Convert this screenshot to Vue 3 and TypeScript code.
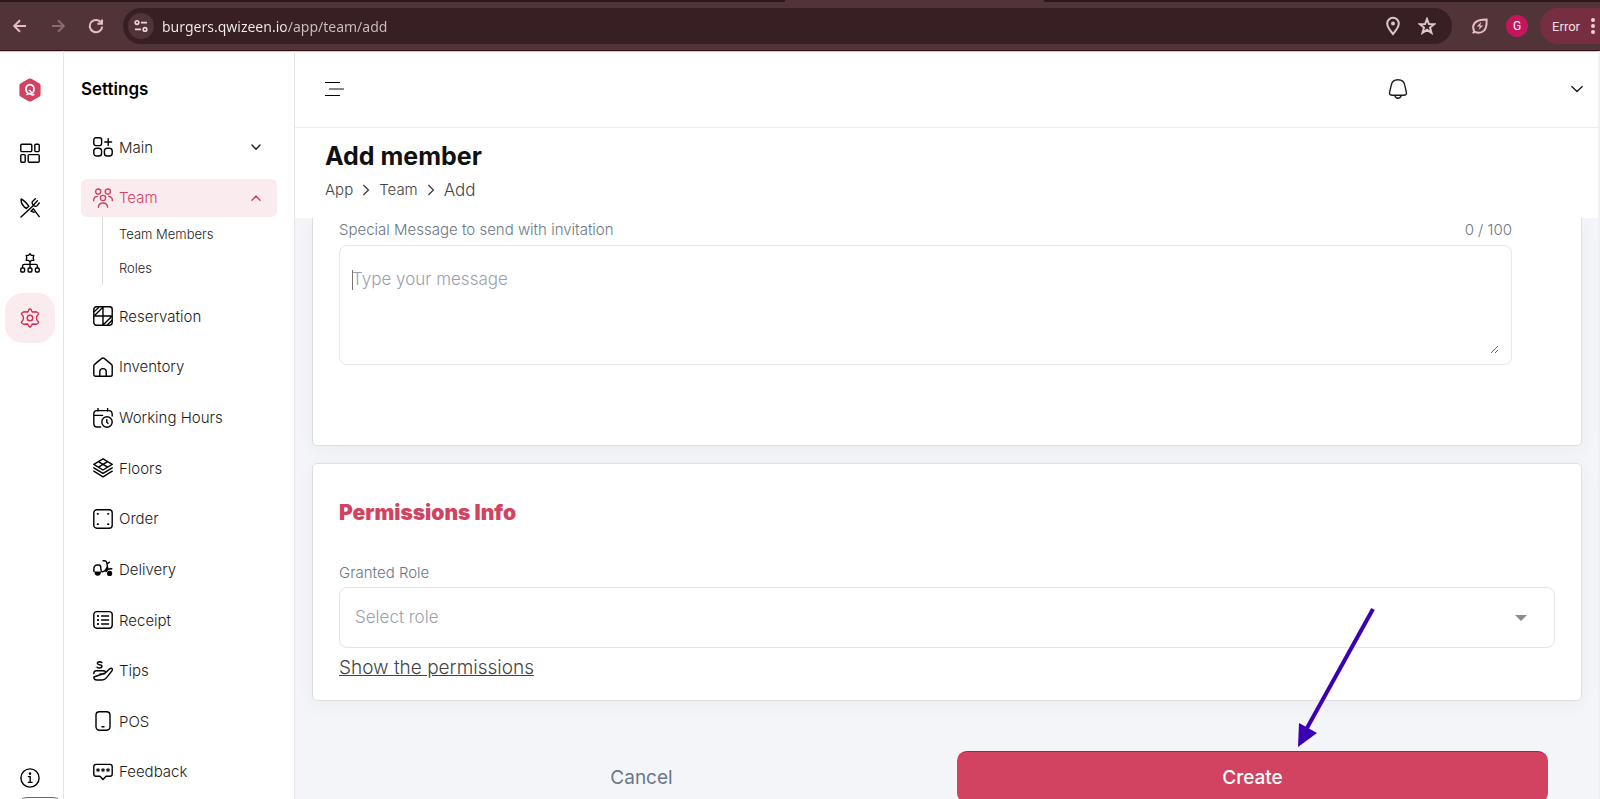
<script setup lang="ts">
import { ref } from 'vue'

interface NavItem {
  label: string
  icon: string
  active?: boolean
  chevron?: 'up' | 'down'
  children?: string[]
}

const url = ref('burgers.qwizeen.io/app/team/add')
const message = ref('')
const role = ref('')

const gear =
  '<path d="M10 .8 Q11 1 12.2 4 L16.4 3.8 Q18.6 4.6 18.6 5.8 L16.8 8.4 Q16.2 10 16.8 11.6 L18.6 14.2 Q18.6 15.4 16.4 16.2 L12.2 16 Q11 19 10 19.2 Q9 19 7.8 16 L3.6 16.2 Q1.4 15.4 1.4 14.2 L3.2 11.6 Q3.8 10 3.2 8.4 L1.4 5.8 Q1.4 4.6 3.6 3.8 L7.8 4 Q9 1 10 .8 Z"/><circle cx="10" cy="10" r="2.8"/>'

const railItems = [
  { label: 'Dashboard', active: false, icon: '<rect x=".8" y="1.2" width="11" height="7.4" rx="1"/><rect x="14.8" y="1.2" width="4.4" height="7.4" rx="1"/><rect x=".8" y="11.6" width="4.4" height="7.6" rx="1"/><rect x="8.2" y="11.6" width="11" height="7.6" rx="1"/>' },
  { label: 'Kitchen', active: false, icon: '<path d="M1 19 L13.4 7.4 M13.4 7.4 Q11 4.8 13 3 L15.4 .8 M13.4 7.4 Q15.8 9.4 17.4 7.4 L19.2 5 M14 6.4 L17.4 2.8 M1.2 1 Q.6 5.6 4 8.6 L6.4 10.6 L8.8 8.2 Q4.8 2.8 1.2 1 Z M11 13.2 L13.4 10.8 L19.2 18.6 M11 13.2 L14.2 14.4"/>' },
  { label: 'Organization', active: false, icon: '<path d="M10 .8 L11.4 2.4 L13.8 2.4 L13.2 4.8 L13.8 7.2 L11.4 7.4 L10 9 L8.6 7.4 L6.2 7.2 L6.8 4.8 L6.2 2.4 L8.6 2.4 Z M10 9 V14.6 M2.6 14.6 V13 Q2.6 11.4 4.2 11.4 H15.8 Q17.4 11.4 17.4 13 V14.6"/><rect x=".8" y="15" width="3.8" height="4" rx="1"/><rect x="8.1" y="15" width="3.8" height="4" rx="1"/><rect x="15.4" y="15" width="3.8" height="4" rx="1"/>' },
  { label: 'Settings', active: true, icon: gear },
]

const navItems: NavItem[] = [
  { label: 'Main', chevron: 'down', icon: '<rect x=".8" y=".8" width="7.8" height="7.8" rx="2"/><rect x=".8" y="11.2" width="7.8" height="7.8" rx="2.8"/><rect x="11.4" y="11.2" width="7.8" height="7.8" rx="2.8"/><path d="M15.2 1.6 V8.4 M11.8 5 H18.6"/>' },
  { label: 'Team', chevron: 'up', active: true, children: ['Team Members', 'Roles'], icon: '<circle cx="5.2" cy="3.6" r="2.6"/><circle cx="14.8" cy="3.6" r="2.6"/><circle cx="10" cy="10" r="2.6"/><path d="M.6 12.6 Q.8 8.6 4.4 8.4 M19.4 12.6 Q19.2 8.6 15.6 8.4 M5.4 19.2 Q5.6 15 10 15 Q14.4 15 14.6 19.2"/>' },
  { label: 'Reservation', icon: '<rect x=".8" y=".8" width="18.4" height="18.4" rx="2.6"/><path d="M10 1 V19 M1 10 H19 M1.4 5.6 L5.6 1.4 M1.6 9.4 L9.6 1.6 M10.8 18.2 L18.6 10.6 M14.6 18.8 L18.8 14.6"/>' },
  { label: 'Inventory', icon: '<path d="M.8 8.8 Q.8 8 1.6 7.4 L8.8 1.4 Q10 .5 11.2 1.4 L18.4 7.4 Q19.2 8 19.2 8.8 V17.4 Q19.2 19.2 17.4 19.2 H2.6 Q.8 19.2 .8 17.4 Z M6.8 19 V14.6 Q6.8 11.6 10 11.6 Q13.2 11.6 13.2 14.6 V19"/>' },
  { label: 'Working Hours', icon: '<path d="M7.6 19 H4 Q.8 19 .8 15.8 V5.8 Q.8 2.6 4 2.6 H16 Q19 2.6 19.2 6.4 V8 M5 .4 V3 M14.6 .4 V3 M1 7.4 H9.6"/><circle cx="14" cy="14" r="5.2"/><path d="M13.8 11.6 V14.2 L15 15.2"/>' },
  { label: 'Floors', icon: '<path d="M10 .8 L19.2 6.4 L10 12 L.8 6.4 Z M5.4 3.6 L14.6 9.2 M14.6 3.6 L5.4 9.2 M.8 9.8 L10 15.4 L19.2 9.8 M.8 13.2 L10 18.8 L19.2 13.2"/>' },
  { label: 'Order', icon: '<rect x=".8" y=".8" width="18.4" height="18.4" rx="3"/><path d="M4.6 4.8 H5 M15 4.8 H15.4 M4.6 15.2 H5 M15 15.2 H15.4" stroke-width="1.8"/>' },
  { label: 'Delivery', icon: '<path d="M1 12.4 Q.2 6 4.2 6 H6 Q7.6 6 7.8 8.4 Q7.8 12.8 9.4 12.8 Q12.6 12.4 14.4 7.4 M10.2 1.8 Q13.6 1.2 13.8 4 L14.8 9.6 M14.4 4.6 L16.4 3.2 M13 12.6 Q14.4 9.6 18.8 9.8"/><path d="M1.4 12.4 H8 Q8 16.8 4.8 16.8 Q1.4 16.8 1.4 12.4 Z" fill="currentColor" stroke="none"/><circle cx="16.6" cy="14.4" r="2.6" fill="currentColor" stroke="none"/>' },
  { label: 'Receipt', icon: '<rect x=".8" y="1.6" width="18.4" height="16.6" rx="3"/><path d="M4.8 6 H5.2 M4.8 10 H5.2 M4.8 14 H5.2" stroke-width="1.8"/><path d="M8.6 6 H15.6 M8.6 10 H15.6 M8.6 14 H15.6"/>' },
  { label: 'Tips', icon: '<path d="M9 1.6 Q8 .8 6.4 .8 Q4.2 1 4.4 2.6 Q4.8 3.6 6.4 3.8 Q9 4 9 5.4 Q8.8 7 6.4 7 Q4.8 7 4 6.2"/><path d="M.8 12.6 Q.8 9.8 3.4 9.8 H10.4 Q12.8 10 12.4 11.6 Q12 13 10.4 13 H7 M12.4 12 L16.4 8 Q18.2 6.6 19.2 7.8 Q19.8 8.6 18.8 10 L13.6 16.6 Q11.8 19 9 19 H3.8 Q.8 19 .8 16 Z"/>' },
  { label: 'POS', icon: '<rect x="3" y=".8" width="14" height="18.4" rx="3.4"/><path d="M9 15.8 H11"/>' },
  { label: 'Feedback', icon: '<path d="M3 2.4 H17 Q19.2 2.4 19.2 4.6 V12 Q19.2 14.2 17 14.2 H13 L10 17.4 L7 14.2 H3 Q.8 14.2 .8 12 V4.6 Q.8 2.4 3 2.4 Z"/><path d="M5 6.4 V9.8 M3.6 7.4 L6.4 8.8 M6.4 7.4 L3.6 8.8 M10 6.4 V9.8 M8.6 7.4 L11.4 8.8 M11.4 7.4 L8.6 8.8 M15 6.4 V9.8 M13.6 7.4 L16.4 8.8 M16.4 7.4 L13.6 8.8" stroke-width="1"/>' },
]
</script>

<template>
  <div class="window">
    <header class="browser">
      <div class="tabs"><span></span><span class="tab"></span><span></span></div>
      <div class="toolbar">
        <button class="tool" aria-label="Back">
          <svg width="16" height="16" viewBox="0 0 16 16"><path d="M14 8 H2.4 M8 2.2 L2.2 8 L8 13.8" /></svg>
        </button>
        <button class="tool dim" aria-label="Forward">
          <svg width="16" height="16" viewBox="0 0 16 16"><path d="M2 8 H13.6 M8 2.2 L13.8 8 L8 13.8" /></svg>
        </button>
        <button class="tool" aria-label="Reload">
          <svg width="16" height="16" viewBox="0 0 16 16"><path d="M13.4 5 A6.2 6.2 0 1 0 14.2 8.6 M14 1.4 V5.8 H9.4" /></svg>
        </button>
        <div class="address">
          <button class="site" aria-label="Site information">
            <svg width="14" height="14" viewBox="0 0 14 14"><circle cx="3" cy="3.6" r="1.8" /><path d="M7 3.6 H13 M1 10.4 H7" /><circle cx="11" cy="10.4" r="1.8" /></svg>
          </button>
          <input v-model="url" class="url" type="text" aria-label="Address" />
          <button class="tool light" aria-label="Location">
            <svg width="16" height="20" viewBox="0 0 16 20"><path d="M8 18 Q2.2 11.4 2.2 7.6 A5.8 5.8 0 0 1 13.8 7.6 Q13.8 11.4 8 18 Z" /><circle cx="8" cy="7.4" r="2" fill="currentColor" stroke="none" /></svg>
          </button>
          <button class="tool light" aria-label="Bookmark">
            <svg width="18" height="18" viewBox="0 0 18 18"><path d="M9 2 L10.9 7 L16.2 7.2 L12 10.5 L13.5 15.8 L9 12.8 L4.5 15.8 L6 10.5 L1.8 7.2 L7.1 7 Z" /></svg>
          </button>
        </div>
        <button class="tool" aria-label="Energy saver">
          <svg width="18" height="18" viewBox="0 0 18 18"><path d="M3.4 14.6 Q.8 10 3.6 6.2 Q6.4 2.4 15.6 2.4 Q16 10.6 13 13.6 Q9 17.4 3.4 14.6 Z M3.4 14.6 L1.8 16.2" /><path d="M10.4 4.8 L5.8 9.6 H8.8 L7.6 13 L12.2 8.4 H9.2 Z" fill="currentColor" stroke="none" /></svg>
        </button>
        <button class="profile" aria-label="Profile">G</button>
        <button class="error">
          Error
          <svg width="4" height="16" viewBox="0 0 4 16"><circle cx="2" cy="2" r="2" /><circle cx="2" cy="8" r="2" /><circle cx="2" cy="14" r="2" /></svg>
        </button>
      </div>
    </header>

    <div class="app">
      <aside class="rail">
        <a class="logo" href="#" aria-label="Home">
          <svg width="24" height="24" viewBox="0 0 24 24">
            <path d="M10.6 .8 Q12 0 13.4 .8 L21.2 5.2 Q22.6 6 22.6 7.6 V16.4 Q22.6 18 21.2 18.8 L13.4 23.2 Q12 24 10.6 23.2 L2.8 18.8 Q1.4 18 1.4 16.4 V7.6 Q1.4 6 2.8 5.2 Z" fill="#d14360" />
            <ellipse cx="12" cy="11.2" rx="4" ry="4.6" fill="none" stroke="#fff" stroke-width="1.8" />
            <path d="M8.4 17 Q11 14.4 13 16.4 Q14.6 17.6 16.4 16.4 M10.6 12.4 Q12.6 12 13.4 15" fill="none" stroke="#fff" stroke-width="1.3" />
          </svg>
        </a>
        <nav class="rail-nav" aria-label="Sections">
          <button v-for="item in railItems" :key="item.label" class="rail-item" :class="{ active: item.active }" :aria-label="item.label">
            <svg class="icon" width="20" height="20" viewBox="0 0 20 20" v-html="item.icon"></svg>
          </button>
        </nav>
        <button class="info" aria-label="Information">
          <svg class="icon" width="20" height="20" viewBox="0 0 20 20"><circle cx="10" cy="10" r="9.1" /><path d="M8.4 8.6 H10.2 V14.4 M8.4 14.4 H12" /><circle cx="10" cy="5.6" r=".6" fill="currentColor" /></svg>
        </button>
        <div class="dock"></div>
      </aside>

      <aside class="sidebar">
        <h2>Settings</h2>
        <nav class="menu" aria-label="Settings">
          <div v-for="item in navItems" :key="item.label">
            <a class="menu-item" :class="{ active: item.active }" href="#">
              <svg class="icon" width="20" height="20" viewBox="0 0 20 20" v-html="item.icon"></svg>
              <span>{{ item.label }}</span>
              <svg v-if="item.chevron" class="icon chevron" width="10" height="10" viewBox="0 0 10 10">
                <path :d="item.chevron === 'up' ? 'M1 7.2 L5 3 L9 7.2' : 'M1 3 L5 7.2 L9 3'" />
              </svg>
            </a>
            <div v-if="item.children" class="submenu">
              <a v-for="child in item.children" :key="child" href="#">{{ child }}</a>
            </div>
          </div>
        </nav>
      </aside>

      <main class="main">
        <div class="topbar">
          <button class="plain" aria-label="Toggle menu">
            <svg width="20" height="16" viewBox="0 0 20 16"><path d="M0 1.5 H15 M0 14.5 H15" stroke="#000" /><path d="M4 8 H19" stroke="#888" stroke-width="2" /></svg>
          </button>
          <button class="plain bell" aria-label="Notifications">
            <svg class="icon" width="20" height="20" viewBox="0 0 20 20"><path d="M4.4 16.2 Q1 16.2 1.6 13.4 L3.2 6.4 Q4.2 .8 10 .8 Q15.8 .8 16.8 6.4 L18.4 13.4 Q19 16.2 15.6 16.2 Z M6.8 16.4 Q7.4 19.2 10 19.2 Q12.6 19.2 13.2 16.4" /></svg>
          </button>
          <button class="plain" aria-label="Account menu">
            <svg class="icon" width="12" height="12" viewBox="0 0 12 12"><path d="M.8 3.6 L6 8.4 L11.2 3.6" /></svg>
          </button>
        </div>

        <div class="heading">
          <h1>Add member</h1>
          <nav class="crumbs" aria-label="Breadcrumb">
            <a href="#">App</a>
            <svg width="8" height="12" viewBox="0 0 8 12"><path d="M1.4 1 L6.4 6 L1.4 11" /></svg>
            <a href="#">Team</a>
            <svg width="8" height="12" viewBox="0 0 8 12"><path d="M1.4 1 L6.4 6 L1.4 11" /></svg>
            <span class="current">Add</span>
          </nav>
        </div>

        <form class="content" @submit.prevent>
          <section class="card message-card">
            <div class="label-row">
              <label for="message">Special Message to send with invitation</label>
              <span>{{ message.length }} / 100</span>
            </div>
            <div class="message-box">
              <span class="caret"></span>
              <textarea id="message" v-model="message" maxlength="100" placeholder="Type your message"></textarea>
            </div>
          </section>

          <section class="card role-card">
            <h3>Permissions Info</h3>
            <label for="role">Granted Role</label>
            <div class="select-box">
              <select id="role" v-model="role">
                <option value="">Select role</option>
              </select>
            </div>
            <a class="show" href="#">Show the permissions</a>
          </section>

          <div class="actions">
            <button type="button" class="cancel">Cancel</button>
            <button type="submit" class="create">Create</button>
          </div>
        </form>

        <svg class="arrow" width="80" height="140" viewBox="0 0 80 140">
          <path d="M76 1 L10 120" stroke="#3a00b4" stroke-width="4" />
          <path d="M1 139 L2 115 L20 125 Z" fill="#3a00b4" />
        </svg>
      </main>
    </div>
  </div>
</template>

<style>
html,
body {
  margin: 0;
  overflow: hidden;
}
</style>

<style scoped>
* {
  box-sizing: border-box;
}
.window {
  display: flex;
  flex-direction: column;
  height: 100vh;
  overflow: hidden;
  background: #fff;
  color: #1c1c1c;
  font-family: Inter, sans-serif;
  font-size: 15px;
  font-weight: 300;
}
button,
input,
select,
textarea {
  margin: 0;
  padding: 0;
  border: 0;
  background: none;
  color: inherit;
  font: inherit;
  outline: none;
}
a {
  color: inherit;
  text-decoration: none;
}
h1,
h2,
h3 {
  margin: 0;
}
svg {
  display: block;
  flex: none;
}
.icon {
  fill: none;
  stroke: currentColor;
  stroke-width: 1.4;
  stroke-linecap: round;
  stroke-linejoin: round;
}

/* browser bar */
.browser {
  flex: none;
  background: #503438;
  border-bottom: 1px solid #3a0c18;
  box-shadow: 0 1px 0 #cfc6c8;
}
.tabs {
  display: grid;
  grid-template-columns: 785fr 258fr 556fr;
  height: 2px;
  background: #2c171b;
}
.tab {
  background: #503438;
}
.toolbar {
  display: flex;
  align-items: center;
  height: 48px;
  padding-left: 12px;
  overflow: hidden;
}
.tool {
  display: grid;
  place-items: center;
  flex: none;
  width: 36px;
  height: 32px;
  margin-right: 2px;
  color: #e8bcc4;
}
.tool svg {
  fill: none;
  stroke: currentColor;
  stroke-width: 2;
}
.tool:first-child {
  width: 16px;
  margin-right: 12px;
}
.tool.dim {
  width: 36px;
  color: #8c6b70;
}
.tool.light {
  width: 34px;
  margin: 0;
  color: #dcc8cb;
}
.address {
  display: flex;
  align-items: center;
  flex: 1;
  height: 36px;
  margin: 0 10px 0 7px;
  padding: 0 8px 0 5px;
  border-radius: 18px;
  background: #381f23;
}
.site {
  display: grid;
  place-items: center;
  width: 26px;
  height: 26px;
  border-radius: 13px;
  background: #503438;
}
.site svg {
  fill: none;
  stroke: #ead9dc;
  stroke-width: 1.6;
}
.url {
  flex: 1;
  min-width: 0;
  height: 32px;
  margin-left: 8px;
  background: linear-gradient(90deg, #f5eeef 124px, #cdbfc1 124px);
  background-clip: text;
  color: transparent;
  font-family: "Noto Sans", sans-serif;
  font-size: 14px;
  font-weight: 400;
}
.profile {
  width: 22px;
  height: 22px;
  margin: 0 12px 0 6px;
  border-radius: 11px;
  background: #c2185b;
  color: #fff;
  font-family: Roboto, sans-serif;
  font-size: 12px;
  font-weight: 400;
}
.error {
  display: flex;
  align-items: center;
  gap: 11px;
  height: 36px;
  padding: 0 5px 0 12px;
  border-radius: 18px 0 0 18px;
  background: #762f41;
  color: #f3dde2;
  font-family: Roboto, sans-serif;
  font-size: 13px;
  font-weight: 400;
}
.error svg {
  fill: #f3cfd7;
}

/* frame */
.app {
  display: flex;
  flex: 1;
  min-height: 0;
}
.rail {
  display: flex;
  flex-direction: column;
  flex: none;
  width: 64px;
  padding-top: 27px;
  border-right: 1px solid #e6e6e6;
  overflow: hidden;
}
.logo {
  align-self: flex-start;
  margin-left: 18px;
}
.rail-nav {
  display: flex;
  flex-direction: column;
  flex: 1;
  gap: 5px;
  margin: 26px 0 0 5px;
}
.rail-item {
  display: grid;
  place-items: center;
  width: 50px;
  height: 50px;
  border-radius: 18px;
  color: #000;
}
.rail-item.active {
  background: #faebee;
  color: #d62e56;
}
.info {
  align-self: flex-start;
  margin: 0 0 9px 20px;
  color: #000;
}
.dock {
  flex: none;
  align-self: flex-end;
  width: 46px;
  height: 20px;
  margin-bottom: -18px;
  border: 1px solid #666;
  border-radius: 10px;
}
.sidebar {
  display: flex;
  flex-direction: column;
  flex: none;
  width: 231px;
  padding: 27px 17px 8px;
  border-right: 1px solid #e6e6e6;
}
h2 {
  font-size: 17px;
  font-weight: 600;
  line-height: 22px;
  color: #000;
}
.menu {
  display: flex;
  flex-direction: column;
  flex: 1;
  justify-content: space-between;
  margin-top: 28px;
}
.menu-item {
  display: flex;
  align-items: center;
  gap: 6px;
  height: 38px;
  padding: 0 16px 0 12px;
  border-radius: 6px;
}
.menu-item .icon:first-child {
  color: #000;
}
.menu-item.active,
.menu-item.active .icon:first-child {
  color: #d14360;
}
.menu-item.active {
  background: #faebee;
}
.chevron {
  margin-left: auto;
}
.submenu {
  display: flex;
  flex-direction: column;
  margin-left: 21px;
  padding-left: 16px;
  border-left: 1px solid #ddd;
  font-size: 13px;
  line-height: 34px;
}

/* page */
.main {
  position: relative;
  display: flex;
  flex-direction: column;
  flex: 1;
  min-width: 0;
  border-right: 2px solid #f0f0f0;
}
.topbar {
  display: flex;
  align-items: center;
  flex: none;
  height: 77px;
  padding: 0 15px 0 30px;
  border-bottom: 1px solid #ececec;
}
.topbar svg {
  fill: none;
}
.bell {
  margin: 0 163px 0 auto;
}
.heading {
  flex: none;
  height: 90px;
  padding: 12px 30px 0;
}
h1 {
  color: #111;
  font-size: 25px;
  font-weight: 700;
  line-height: 32px;
}
.crumbs {
  display: flex;
  align-items: center;
  gap: 9px;
  margin-top: 6px;
  line-height: 24px;
  color: #444;
}
.crumbs svg {
  fill: none;
  stroke: #444;
  stroke-width: 1.4;
}
.current {
  font-size: 17px;
}
.content {
  flex: 1;
  min-height: 0;
  padding: 0 16px 0 17px;
  background: #f4f5f9;
  overflow: hidden;
}
.card {
  padding: 0 26px;
  border: 1px solid #dedee0;
  border-radius: 5px;
  background: #fff;
  box-shadow: 0 4px 20px #0000000a;
  color: #6b7785;
}
.message-card {
  padding: 1px 69px 80px 26px;
  border-top: 0;
  border-radius: 0 0 5px 5px;
}
.label-row {
  display: flex;
  justify-content: space-between;
  line-height: 22px;
}
.message-box {
  position: relative;
  margin-top: 4px;
  padding: 12px 12px 10px;
  border: 1px solid #e8e8e8;
  border-radius: 8px;
}
textarea {
  display: block;
  width: 100%;
  height: 96px;
  padding: 10px 0;
  resize: vertical;
  font-size: 17px;
  line-height: 22px;
}
textarea::placeholder {
  color: #9a9fae;
}
.caret {
  position: absolute;
  top: 24px;
  left: 12px;
  width: 1px;
  height: 20px;
  background: #777;
}
.role-card {
  margin-top: 17px;
  padding: 36px 26px 20px;
}
h3 {
  margin-bottom: 36px;
  color: #d14360;
  font-size: 21px;
  font-weight: 900;
  line-height: 26px;
}
.role-card label {
  display: block;
  line-height: 22px;
}
.select-box {
  position: relative;
  margin-top: 3px;
}
.select-box::after {
  content: "";
  position: absolute;
  top: 28px;
  right: 28px;
  border: 6px solid transparent;
  border-top-color: #8c8c8c;
  border-bottom: 0;
  pointer-events: none;
}
select {
  display: block;
  width: 100%;
  height: 61px;
  padding: 0 15px 2px;
  border: 1px solid #e4e4e4;
  border-radius: 8px;
  appearance: none;
  color: #9a9fae;
  font-size: 17px;
}
.show {
  display: inline-block;
  margin-top: 7px;
  color: #444;
  font-size: 19px;
  line-height: 25px;
  text-decoration: underline;
}
.actions {
  display: grid;
  grid-template-columns: 1fr 1fr;
  gap: 20px;
  margin: 50px 34px 0;
}
.actions button {
  height: 52px;
  border-radius: 10px;
  font-size: 19px;
  font-weight: 400;
}
.actions .cancel {
  color: #6b7785;
}
.actions .create {
  background: #d14360;
  border-top: 1px solid #c4114a;
  color: #fff;
  font-weight: 500;
}
.arrow {
  position: absolute;
  right: 221px;
  bottom: 51px;
  fill: none;
  pointer-events: none;
}
</style>
